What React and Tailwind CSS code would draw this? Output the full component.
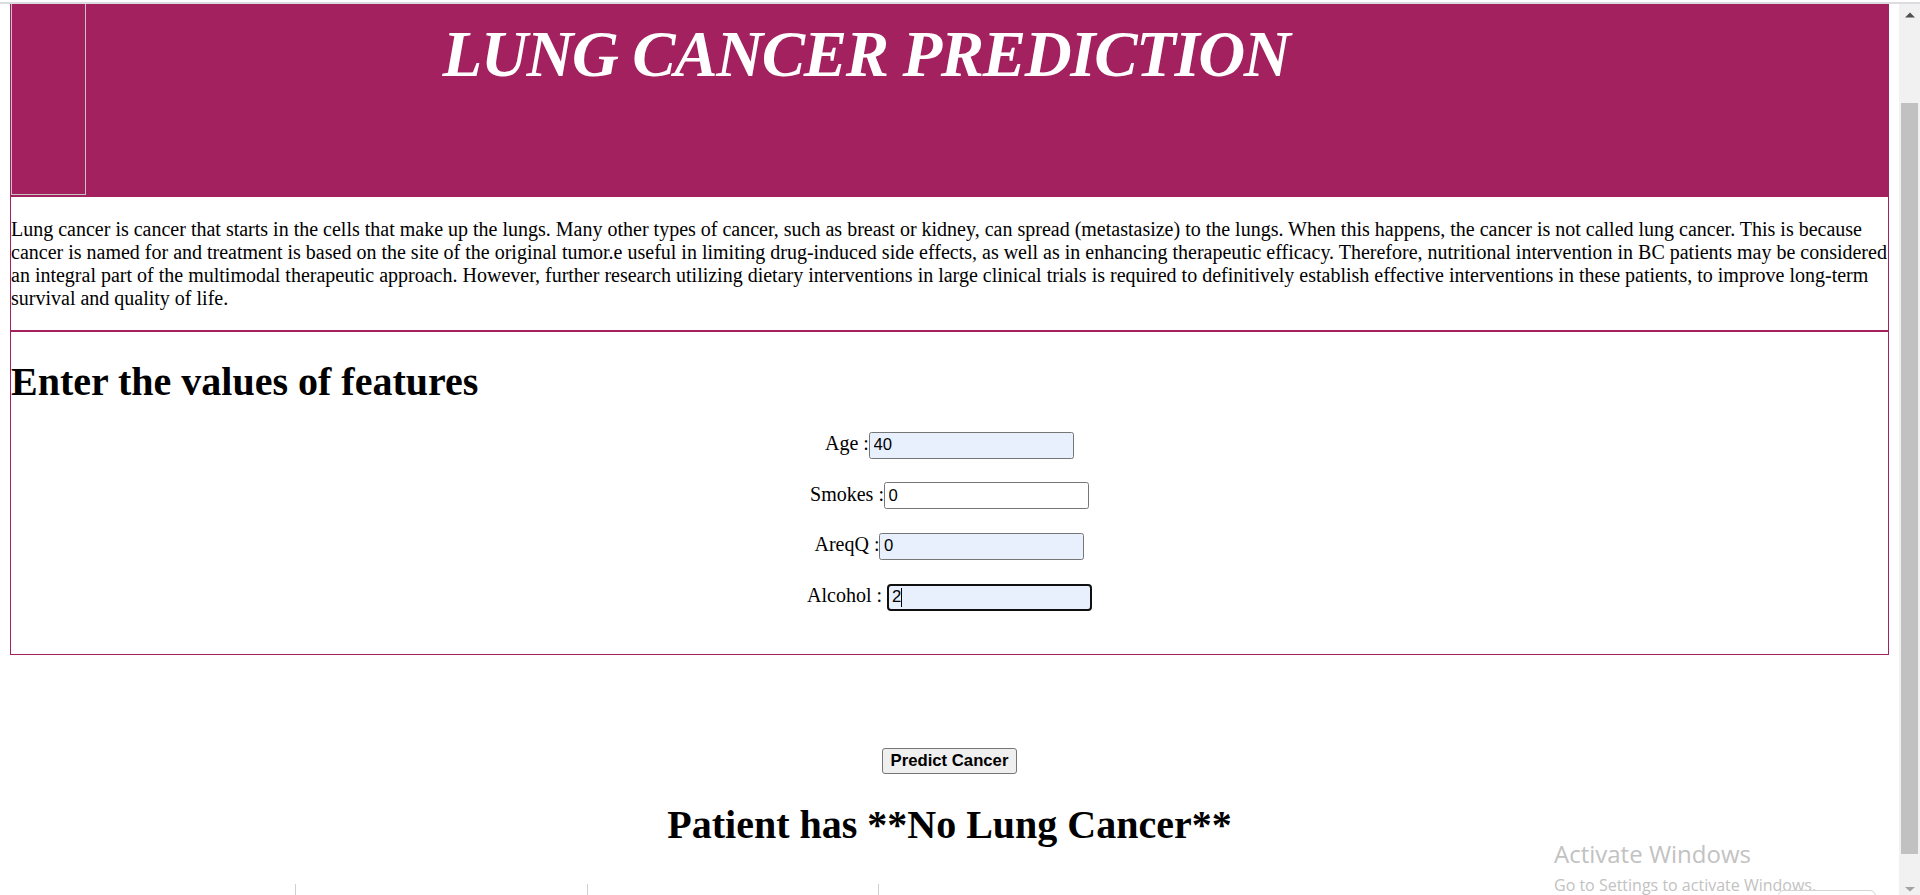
import React from "react";

const MAG = "border-[#a3215f]";

function Field({ label, value, filled, focused }) {
  return (
    <div className="flex items-baseline justify-center h-[27px]">
      <span className="text-[20px] leading-[23px] whitespace-pre">{label}</span>
      <div className="relative">
        <input
          readOnly
          value={value}
          className={
            "w-[205px] h-[27px] font-['Liberation_Sans',Arial,sans-serif] text-[16.7px] text-black outline-none " +
            (focused
              ? "border-2 border-[#101010] rounded-[4px] pl-[3px] "
              : "border border-[#767676] rounded-[2.5px] pl-[3.6px] ") +
            (filled ? "bg-[#e8f0fe]" : "bg-white")
          }
        />
        {focused && (
          <span className="absolute left-[14px] top-[4px] w-px h-[19px] bg-black" />
        )}
      </div>
    </div>
  );
}

export default function App() {
  return (
    <div className="w-[1920px] h-[895px] overflow-hidden bg-white relative font-['Liberation_Serif','Times_New_Roman',serif] text-black">
      <div className="h-[2px] bg-white" />
      <div className="h-[2px] bg-[#dadce0]" />
      <div className="flex h-[891px]">
        <div className="flex-1 px-[10px] overflow-hidden">
          {/* Section 1 */}
          <div className={"border border-t-0 " + MAG}>
            <div className="flex h-[193px] bg-[#a3215f]">
              <div className="w-[75px] h-[190.5px] border-x border-b border-[#c4c4c4] shrink-0" />
              <div className="w-[1560px] text-center pt-[12.8px]">
                <h1 className="text-[65px] leading-[75px] font-bold italic text-white tracking-[-1.4px]">
                  LUNG CANCER PREDICTION
                </h1>
              </div>
            </div>
            <p className="text-[20px] leading-[23px] mt-[21px] mb-[20px]">
              Lung cancer is cancer that starts in the cells that make up the lungs. Many other types of cancer, such as breast or kidney, can spread (metastasize) to the lungs. When this happens, the cancer is not called lung cancer. This is because cancer is named for and treatment is based on the site of the original tumor.e useful in limiting drug-induced side effects, as well as in enhancing therapeutic efficacy. Therefore, nutritional intervention in BC patients may be considered an integral part of the multimodal therapeutic approach. However, further research utilizing dietary interventions in large clinical trials is required to definitively establish effective interventions in these patients, to improve long-term survival and quality of life.
            </p>
          </div>

          {/* Section 2 */}
          <div className={"border h-[324px] " + MAG}>
            <h1 className="text-[40px] leading-[46px] font-bold mt-[26.8px] mb-[26.8px]">
              Enter the values of features
            </h1>
            <div className="flex flex-col gap-[23.67px]">
              <Field label="Age :" value="40" filled />
              <Field label="Smokes :" value="0" />
              <Field label="AreqQ :" value="0" filled />
              <Field label="Alcohol : " value="2" filled focused />
            </div>
          </div>

          <div className="flex justify-center mt-[93px]">
            <button className="h-[26px] px-[8px] bg-[#efefef] border border-[#767676] rounded-[3px] font-['Liberation_Sans',Arial,sans-serif] font-bold text-[16.7px] leading-[20px]">
              Predict Cancer
            </button>
          </div>

          <h1 className="text-[40px] leading-[46px] font-bold text-center mt-[28px]">
            Patient has **No Lung Cancer**
          </h1>

          <div className="flex mt-[36px] ml-[285px]">
            <div className="w-[291.5px] h-[11px] border-l border-[#d0d0d0]" />
            <div className="w-[291.5px] h-[11px] border-l border-[#d0d0d0]" />
            <div className="w-[291.5px] h-[11px] border-l border-[#d0d0d0]" />
          </div>
        </div>

        {/* Scrollbar */}
        <div className="w-[21px] bg-[#f1f1f1] flex flex-col items-center shrink-0">
          <div className="h-[21px] flex items-center justify-center">
            <svg width="10" height="6" viewBox="0 0 10 6">
              <path d="M0 5.5 L5 0.5 L10 5.5 Z" fill="#505050" />
            </svg>
          </div>
          <div className="mt-[78px] w-[17px] h-[751px] bg-[#c1c1c1]" />
          <div className="mt-[33px]">
            <svg width="10" height="5" viewBox="0 0 10 5">
              <path d="M0 0 L5 4.5 L10 0 Z" fill="#a3a3a3" />
            </svg>
          </div>
        </div>
      </div>

      {/* Windows watermark */}
      <div className="absolute left-[1554px] top-[842px] font-['Open_Sans','Noto_Sans',sans-serif] text-[#c2c2c2] pointer-events-none">
        <div className="text-[24px] leading-[24px]">Activate Windows</div>
        <div className="text-[16px] leading-[16px] mt-[10.5px]">Go to Settings to activate Windows.</div>
      </div>
      <div className="absolute left-[1778px] top-[890px] w-[98px] h-[20px] border border-[#d4d4d4] rounded-[6px]" />
    </div>
  );
}
